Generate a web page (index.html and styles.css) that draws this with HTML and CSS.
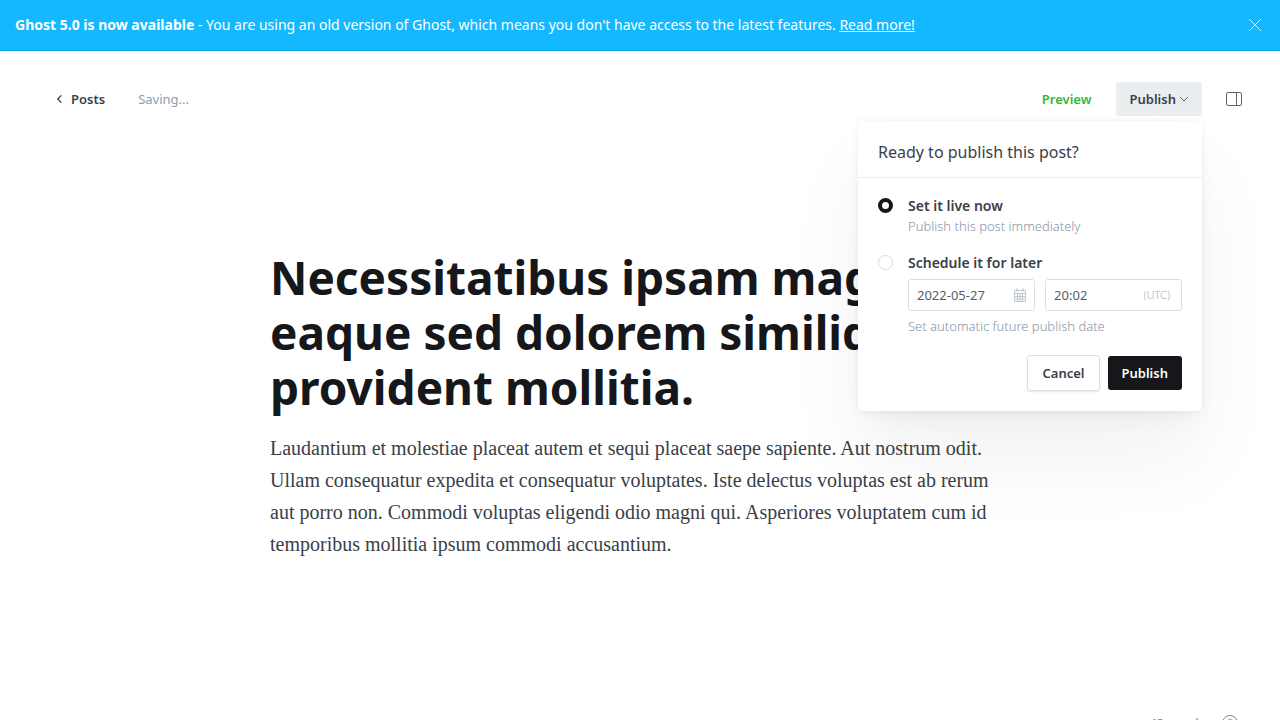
FILE: index.html
```
<!DOCTYPE html>
<html lang="en">
<head>
<meta charset="utf-8">
<meta name="viewport" content="width=device-width, initial-scale=1">
<title>Ghost editor</title>
<link rel="stylesheet" href="styles.css">
</head>
<body>
<div class="app">
  <aside class="banner">
    <p class="banner-text"><strong>Ghost 5.0 is now available</strong> - You are using an old version of Ghost, which means you don't have access to the latest features. <a href="#">Read more!</a></p>
    <button class="banner-close" type="button" aria-label="Close">
      <svg width="14" height="14" viewBox="0 0 14 14" fill="none" stroke="currentColor" stroke-width=".8"><path d="M1 1l12 12M13 1L1 13"/></svg>
    </button>
  </aside>

  <div class="editor">
    <header class="toolbar">
      <div class="toolbar-left">
        <a class="back" href="#">
          <svg width="6" height="8" viewBox="0 0 6 8" fill="none" stroke="currentColor" stroke-width="1.2" stroke-linecap="round" stroke-linejoin="round"><path d="M5 .6L1.700 4 5 7.400"/></svg>
          <span>Posts</span>
        </a>
        <span class="status">Saving...</span>
      </div>
      <div class="toolbar-right">
        <button class="preview" type="button">Preview</button>
        <div class="publish-menu">
          <button class="publish-toggle" type="button" aria-expanded="true">
            <span>Publish</span>
            <svg width="8" height="6" viewBox="0 0 8 6" fill="none" stroke="currentColor" stroke-linecap="round" stroke-linejoin="round"><path d="M.5 1.500L4 5l3.500-3.500"/></svg>
          </button>
          <form class="popover">
            <h2 class="popover-title">Ready to publish this post?</h2>
            <div class="popover-body">
              <div class="option">
                <input class="radio" type="radio" name="when" id="now" checked>
                <div class="option-content">
                  <label class="option-label" for="now">Set it live now</label>
                  <p class="hint">Publish this post immediately</p>
                </div>
              </div>
              <div class="option">
                <input class="radio" type="radio" name="when" id="later">
                <div class="option-content">
                  <label class="option-label" for="later">Schedule it for later</label>
                  <div class="fields">
                    <div class="field">
                      <input class="field-input" type="text" value="2022-05-27" aria-label="Publish date">
                      <svg class="calendar" width="12" height="14" viewBox="0 0 12 14" fill="none" stroke="currentColor"><path d="M.5 2.500h11v11H.5zM.5 5.500h11M.5 8.500h11M.5 11h11M3.500 5v8.500M6 5v8.500M8.500 5v8.500" stroke-width=".7"/><path d="M3 .5v3M9 .5v3"/></svg>
                    </div>
                    <div class="field field-time">
                      <input class="field-input" type="text" value="20:02" aria-label="Publish time">
                      <span class="zone">(UTC)</span>
                    </div>
                  </div>
                  <p class="hint">Set automatic future publish date</p>
                </div>
              </div>
              <div class="actions">
                <button class="btn btn-cancel" type="button">Cancel</button>
                <button class="btn btn-publish" type="submit">Publish</button>
              </div>
            </div>
          </form>
        </div>
        <button class="settings" type="button" aria-label="Settings">
          <svg width="16" height="14" viewBox="0 0 16 14" fill="none" stroke="currentColor"><rect x=".5" y=".5" width="15" height="13" rx="1.5"/><path d="M10.500.5v13"/></svg>
        </button>
      </div>
    </header>

    <main class="post">
      <h1 class="post-title">Necessitatibus ipsam magni eaque sed dolorem similique provident mollitia.</h1>
      <p class="post-body">Laudantium et molestiae placeat autem et sequi placeat saepe sapiente. Aut nostrum odit. Ullam consequatur expedita et consequatur voluptates. Iste delectus voluptas est ab rerum aut porro non. Commodi voluptas eligendi odio magni qui. Asperiores voluptatem cum id temporibus mollitia ipsum commodi accusantium.</p>
    </main>

    <footer class="footer">
      <span>43 words</span>
      <a class="help" href="#" aria-label="Help">
        <svg width="16" height="16" viewBox="0 0 16 16" fill="none" stroke="currentColor"><circle cx="8" cy="8" r="7.5"/><path d="M6 6.200c0-2.800 4.200-2.600 4.200 0C10.200 7.800 8 7.700 8 9.500M8 11v1"/></svg>
      </a>
    </footer>
  </div>
</div>
</body>
</html>
```
FILE: styles.css
```
* { box-sizing: border-box; }

body {
  margin: 0;
  background: #fff;
  color: #394047;
  font-family: "Noto Sans", "Open Sans", sans-serif;
  font-size: 13px;
  line-height: 20px;
}

h1, h2, p { margin: 0; }
button, input { font: inherit; color: inherit; margin: 0; }
button { padding: 0; border: 0; background: none; cursor: pointer; }
a { color: inherit; text-decoration: none; }
svg { display: block; flex: none; }

.app { height: 100vh; overflow: hidden; }

.banner {
  display: flex;
  align-items: center;
  justify-content: space-between;
  padding: 15px 18px 15px 15px;
  border-bottom: 1px solid #00a4eb;
  background: #14b8ff;
  color: #fff;
  font-size: 14px;
}
.banner-text a { text-decoration: underline; }

.editor {
  display: flex;
  flex-direction: column;
  height: 100vh;
}

.toolbar {
  display: flex;
  align-items: center;
  justify-content: space-between;
  padding: 31px 38px 0 56px;
}
.toolbar-left, .toolbar-right, .back { display: flex; align-items: center; }
.toolbar-left { gap: 33px; }
.toolbar-right { gap: 24px; }
.back { gap: 9px; font-weight: 600; }
.status { color: #8e9cac; }
.preview { color: #30b939; font-weight: 600; }

.publish-menu { position: relative; }
.publish-toggle {
  display: flex;
  align-items: center;
  gap: 4px;
  height: 34px;
  padding: 0 14px;
  border-radius: 3px;
  background: #ebeef0;
  font-weight: 600;
}
.publish-toggle svg, .settings { color: #5d6670; }

.popover {
  position: absolute;
  top: 100%;
  right: 0;
  z-index: 2;
  width: 344px;
  margin-top: 5px;
  border-radius: 4px;
  background: #fff;
  box-shadow: 0 0 7px rgba(0, 0, 0, .06), 0 12px 20px -6px rgba(0, 0, 0, .05), 0 50px 80px rgba(0, 0, 0, .05);
}
.popover-title {
  padding: 19px 20px 13px;
  border-bottom: 1px solid #e9ecee;
  font-size: 16px;
  font-weight: 400;
  line-height: 24px;
}
.popover-body { padding: 18px 20px 20px; }

.option { display: flex; gap: 15px; margin-bottom: 16px; }
.option-content { flex: 1; min-width: 0; }
.option-label { display: block; font-size: 14px; font-weight: 600; }
.radio {
  flex: none;
  appearance: none;
  width: 15px;
  height: 15px;
  margin-top: 2px;
  border: 1px solid #d3dbe1;
  border-radius: 50%;
}
.radio:checked { border: 4px solid #15171a; }
.hint { color: #8796a6; font-weight: 300; line-height: 21px; }

.fields { display: flex; gap: 10px; margin: 6px 0 5px; }
.field {
  display: flex;
  align-items: center;
  flex: 16;
  min-width: 0;
  height: 32px;
  padding: 0 8px;
  border: 1px solid #dcdfe2;
  border-radius: 3px;
  color: #54606d;
}
.field-time { flex: 17; padding-right: 11px; }
.field-input {
  flex: 1;
  min-width: 0;
  width: 100%;
  padding: 0;
  border: 0;
  outline: 0;
  background: none;
}
.calendar { color: #a9b3bf; }
.zone { color: #a5b0bc; font-size: 11px; font-weight: 300; }

.actions { display: flex; align-items: center; justify-content: flex-end; gap: 8px; margin-top: 18px; }
.btn { height: 34px; padding: 0 14px; border-radius: 3px; font-weight: 600; }
.btn-cancel {
  height: 36px;
  border: 1px solid #dae1e6;
  box-shadow: 0 1px 2px rgba(0, 0, 0, .1);
}
.btn-publish { background: #15171a; color: #fff; }

.post {
  flex: 1;
  width: 100%;
  max-width: 740px;
  margin: 0 auto;
  padding-top: 134px;
}
.post-title {
  color: #15171a;
  font-size: 46px;
  font-weight: 700;
  line-height: 55px;
}
.post-body {
  margin-top: 17px;
  font-family: "Liberation Serif", serif;
  font-size: 20px;
  line-height: 32px;
}

.footer {
  display: flex;
  align-items: center;
  justify-content: flex-end;
  gap: 17px;
  padding: 0 42px 38px;
  color: #7c8b9a;
}
```
